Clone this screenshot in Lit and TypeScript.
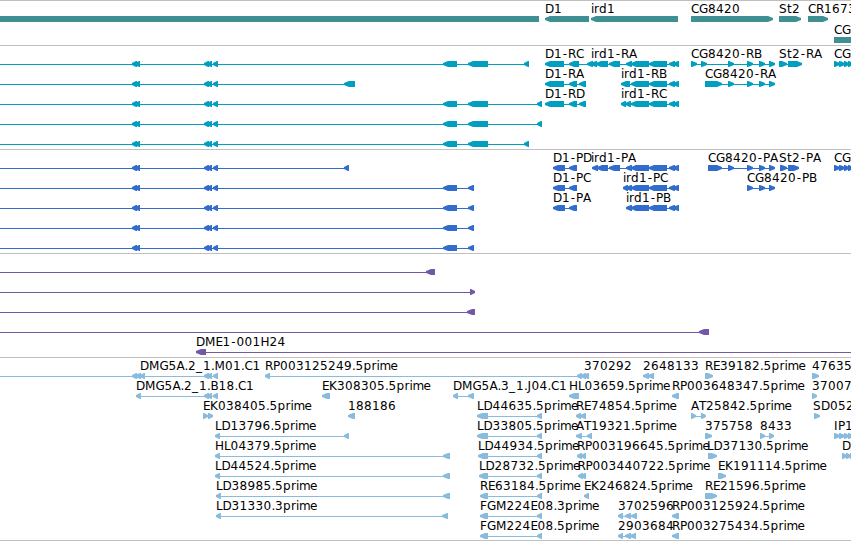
import { LitElement, html, svg, css, nothing } from 'lit';
import { customElement, property } from 'lit/decorators.js';

type Span = [number, number];

interface Feature {
  blocks: Span[];
  dir: 'left' | 'right' | 'none';
  label?: string;
  labelX?: number;
  // spine extent, defaults to the extent of the blocks
  from?: number;
}

interface Track {
  name: string;
  color: string;
  height: number;
  pitch: number;
  rows: Feature[][];
}

const VIEW_WIDTH = 851;
const BLOCK_TOP = 15;
const BLOCK_HEIGHT = 6;
const HEAD = 5;
const OFFSCREEN = -10;

// glyph advances of the label face at 12px, anything else is 8
const ADVANCE: Record<string, number> = {
  '-': 6, '.': 3.5, _: 7, D: 9, G: 9, H: 9, M: 10.5, E: 7, F: 7, L: 6.5, P: 7,
  J: 4, I: 4, T: 7, i: 3, r: 5, t: 5, m: 11, e: 7,
};

function glyphPositions(text: string, start: number) {
  let x = start;
  return [...text]
    .map((ch) => {
      // the hyphen is narrower than its slot, so centre it
      const at = ch === '-' ? x + 0.8 : x;
      x += ADVANCE[ch] ?? 8;
      return at;
    })
    .join(' ');
}

const left = (label: string, blocks: Span[], labelX?: number): Feature => ({
  label, blocks, labelX, dir: 'left',
});
const right = (label: string, blocks: Span[], labelX?: number): Feature => ({
  label, blocks, labelX, dir: 'right',
});
const leftFromEdge = (...blocks: Span[]): Feature => ({
  blocks, dir: 'left', from: OFFSCREEN,
});

const UPSTREAM: Span[] = [[132, 137], [135, 140], [204, 209], [207, 212], [213, 218]];
const IRD1_TAIL: Span[] = [[631, 649], [649, 667], [669, 675], [673, 679]];
const CG8420_TAIL: Span[] = [[728, 734], [747, 753], [759, 765], [769, 775]];
const EDGE_BLOCKS: Span[] = [[834, 840], [839, 845], [844, 849], [848, 853]];

const TRACKS: Track[] = [
  {
    name: 'genes',
    color: '#408f92',
    height: 44,
    pitch: 21,
    rows: [
      [
        { blocks: [[OFFSCREEN, 539]], dir: 'none' },
        left('D1', [[545, 589]]),
        left('ird1', [[591, 678]]),
        right('CG8420', [[691, 773]]),
        right('St2', [[779, 801]]),
        right('CR1673', [[808, 828]]),
      ],
      [{ label: 'CG', blocks: [[834, 860]], dir: 'none' }],
    ],
  },
  {
    name: 'transcripts',
    color: '#009fc0',
    height: 103,
    pitch: 20,
    rows: [
      [
        leftFromEdge(...UPSTREAM, [443, 457], [468, 488], [524, 529]),
        left('D1-RC', [[545, 564], [569, 579], [587, 593]]),
        left('ird1-RA', [[591, 597], [596, 608], [609, 620], [626, 632], ...IRD1_TAIL]),
        right('CG8420-RB', [[691, 697], [701, 707], ...CG8420_TAIL]),
        right('St2-RA', [[779, 787], [788, 802]]),
        right('CG', EDGE_BLOCKS),
      ],
      [
        leftFromEdge(...UPSTREAM, [344, 355]),
        left('D1-RA', [[545, 564], [569, 577], [579, 586]]),
        left('ird1-RB', [[621, 630], ...IRD1_TAIL]),
        right('CG8420-RA', [[705, 722], ...CG8420_TAIL]),
      ],
      [
        leftFromEdge(...UPSTREAM, [443, 457], [468, 488], [537, 542]),
        left('D1-RD', [[545, 564], [569, 577], [579, 586]]),
        left('ird1-RC', [[621, 626], [625, 631], ...IRD1_TAIL]),
      ],
      [leftFromEdge(...UPSTREAM, [443, 457], [468, 488], [537, 542])],
      [leftFromEdge(...UPSTREAM, [443, 457], [468, 488], [524, 529])],
    ],
  },
  {
    name: 'proteins',
    color: '#316dcc',
    height: 103,
    pitch: 20,
    rows: [
      [
        leftFromEdge(...UPSTREAM, [344, 349]),
        left('D1-PD', [[553, 565], [569, 577]]),
        left('ird1-PA', [[592, 598], [597, 608], [609, 620], [626, 632], ...IRD1_TAIL], 591),
        right('CG8420-PA', [[708, 722], ...CG8420_TAIL]),
        right('St2-PA', [[780, 787], [788, 799]], 779),
        right('CG', EDGE_BLOCKS),
      ],
      [
        leftFromEdge(...UPSTREAM, [443, 457], [468, 474]),
        left('D1-PC', [[553, 565], [569, 577]]),
        left('ird1-PC', [[623, 628], [626, 632], ...IRD1_TAIL]),
        right('CG8420-PB', [[747, 753], [759, 765], [769, 775]]),
      ],
      [
        leftFromEdge(...UPSTREAM, [443, 457], [468, 474]),
        left('D1-PA', [[553, 565], [569, 577]]),
        left('ird1-PB', [[626, 632], ...IRD1_TAIL]),
      ],
      [leftFromEdge(...UPSTREAM, [443, 457], [468, 474])],
      [leftFromEdge(...UPSTREAM, [443, 457], [468, 474])],
    ],
  },
  {
    name: 'clones',
    color: '#7358a8',
    height: 103,
    pitch: 20,
    rows: [
      [leftFromEdge([426, 435])],
      [{ blocks: [[470, 475]], dir: 'right', from: OFFSCREEN }],
      [leftFromEdge([467, 475])],
      [leftFromEdge([699, 709])],
      [left('DME1-001H24', [[196, 206], [860, 866]])],
    ],
  },
  {
    name: 'ests',
    color: '#88bbdd',
    height: 182,
    pitch: 20,
    rows: [
      [
        {
          label: 'DMG5A.2_1.M01.C1',
          labelX: 140,
          blocks: [[132, 137], [135, 141], [140, 145], [204, 209], [207, 212], [213, 218]],
          dir: 'left',
          from: OFFSCREEN,
        },
        left('RP003125249.5prime', [[265, 270], [577, 582], [581, 586]]),
        left('370292', [[584, 589]]),
        left('2648133', [[643, 649], [648, 654]]),
        right('RE39182.5prime', [[705, 713]]),
        right('47635', [[812, 819]]),
      ],
      [
        left('DMG5A.2_1.B18.C1', [[136, 141], [204, 209], [207, 212], [213, 218]]),
        left('EK308305.5prime', [[322, 330]]),
        left('DMG5A.3_1.J04.C1', [[453, 458], [468, 474]]),
        left('HL03659.5prime', [[569, 579]]),
        left('RP003648347.5prime', [[672, 679]]),
        right('37007', [[812, 817]]),
      ],
      [
        right('EK038405.5prime', [[203, 208], [208, 213]]),
        left('188186', [[348, 355]]),
        left('LD44635.5prime', [[477, 488], [537, 542]]),
        left('RE74854.5prime', [[576, 581], [580, 586]]),
        right('AT25842.5prime', [[691, 696], [701, 706]]),
        right('SD052', [[814, 820]], 813),
      ],
      [
        left('LD13796.5prime', [[215, 220], [344, 349]]),
        left('LD33805.5prime', [[477, 488], [537, 542]]),
        left('AT19321.5prime', [[576, 582], [587, 592]]),
        right('375758', [[705, 712]]),
        right('8433', [[760, 765], [769, 774]]),
        right('IP1', EDGE_BLOCKS, 834),
      ],
      [
        left('HL04379.5prime', [[215, 220], [443, 450]]),
        left('LD44934.5prime', [[478, 488], [537, 542]]),
        left('RP003196645.5prime', [[577, 582], [581, 586]]),
        right('LD37130.5prime', [[708, 717]], 707),
        right('D', [[842, 847], [846, 851], [850, 855]]),
      ],
      [
        left('LD44524.5prime', [[215, 220], [443, 450]]),
        left('LD28732.5prime', [[479, 488], [537, 542]]),
        left('RP003440722.5prime', [[578, 583], [581, 586]], 577.5),
        right('EK191114.5prime', [[718, 726]]),
      ],
      [
        left('LD38985.5prime', [[216, 221], [443, 450]]),
        left('RE63184.5prime', [[480, 488], [537, 542]]),
        left('EK246824.5prime', [[584, 589]]),
        right('RE21596.5prime', [[705, 717]]),
      ],
      [
        left('LD31330.3prime', [[216, 221], [442, 448]]),
        left('FGM224E08.3prime', [[480, 488], [537, 542]]),
        left('3702596', [[618, 623], [625, 631], [631, 637]]),
        left('RP003125924.5prime', [[672, 679]]),
      ],
      [
        left('FGM224E08.5prime', [[480, 488], [537, 542]]),
        left('2903684', [[618, 623], [625, 631], [630, 636]]),
        left('RP003275434.5prime', [[672, 679]]),
      ],
    ],
  },
];

@customElement('feature-track')
export class FeatureTrack extends LitElement {
  static styles = css`
    :host {
      display: block;
      border-bottom: 1px solid #c0c0c0;
    }
    svg {
      display: block;
      overflow: hidden;
    }
    text {
      font-family: 'DejaVu Sans', sans-serif;
      font-size: 12px;
      fill: #000;
      white-space: pre;
    }
  `;

  @property({ attribute: false })
  track!: Track;

  render() {
    const { height, color, rows, pitch, name } = this.track;
    return html`
      <svg width=${VIEW_WIDTH} height=${height} fill=${color} aria-label=${name}>
        ${rows.map((row, i) =>
          row.map((feature) => this.renderFeature(feature, BLOCK_TOP + i * pitch))
        )}
      </svg>
    `;
  }

  private renderFeature(feature: Feature, top: number) {
    const { blocks, dir, label, labelX } = feature;
    const from = feature.from ?? blocks[0][0];
    const to = blocks[blocks.length - 1][1];
    return svg`
      <rect x=${from} y=${top + 3} width=${to - from} height="1"></rect>
      ${blocks.map((b) => svg`<polygon points=${this.outline(b, dir, top)}></polygon>`)}
      ${label
        ? svg`<text x=${glyphPositions(label, labelX ?? from)} y=${top - 3}>${label}</text>`
        : nothing}
    `;
  }

  private outline([a, b]: Span, dir: Feature['dir'], top: number) {
    const bottom = top + BLOCK_HEIGHT;
    const head = Math.min(HEAD, b - a - 1);
    if (dir === 'left') {
      return `${a},${top + 2} ${a + head},${top} ${b},${top} ${b},${bottom} ${a + head},${bottom} ${a},${top + 4}`;
    }
    if (dir === 'right') {
      return `${a},${top} ${b - head},${top} ${b},${top + 2} ${b},${top + 4} ${b - head},${bottom} ${a},${bottom}`;
    }
    return `${a},${top} ${b},${top} ${b},${bottom} ${a},${bottom}`;
  }
}

@customElement('app-root')
export class AppRoot extends LitElement {
  static styles = css`
    :host {
      display: flex;
      flex-direction: column;
      width: 851px;
      height: 541px;
      box-sizing: border-box;
      overflow: hidden;
      background: #fff;
      border-top: 1px solid #c0c0c0;
    }
  `;

  render() {
    return TRACKS.map((track) => html`<feature-track .track=${track}></feature-track>`);
  }
}

declare global {
  interface HTMLElementTagNameMap {
    'app-root': AppRoot;
    'feature-track': FeatureTrack;
  }
}
